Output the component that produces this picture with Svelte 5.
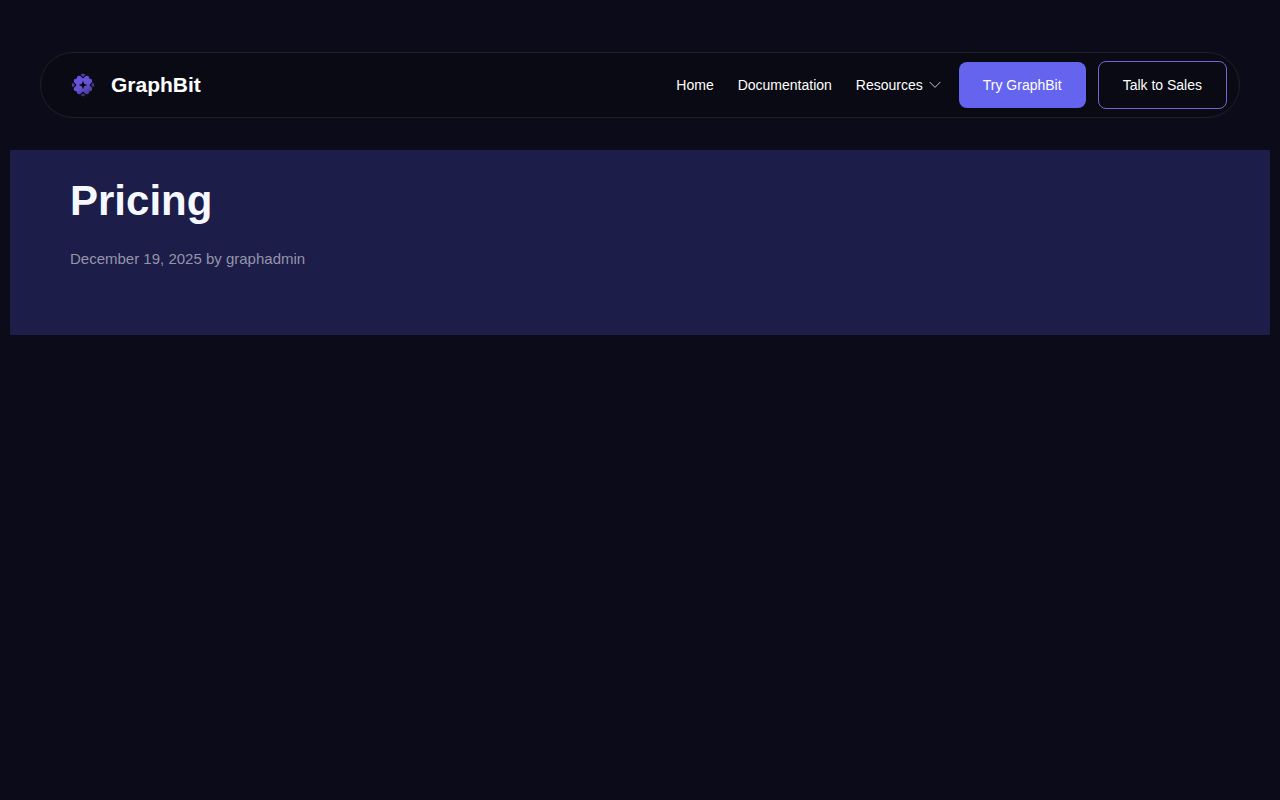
<script lang="ts">
  const links = [
    { label: 'Home', href: '#home' },
    { label: 'Documentation', href: '#documentation' }
  ];

  // the small logo tips, one for each side
  const tips = [0, 90, 180, 270];
</script>

<div class="page">
  <header class="navbar">
    <a class="brand" href="#home">
      <svg class="logo" viewBox="-12 -12 24 24" aria-hidden="true">
        <defs>
          <linearGradient id="logo-fill" gradientUnits="userSpaceOnUse" x1="-6" y1="-9" x2="7" y2="10">
            <stop offset="0" stop-color="#6a51e6" />
            <stop offset="0.5" stop-color="#6553d2" />
            <stop offset="1" stop-color="#40368c" />
          </linearGradient>
          <mask id="logo-mask" maskUnits="userSpaceOnUse" x="-12" y="-12" width="24" height="24">
            <path
              fill="#fff"
              d="M0 -6.4L3 -9.2L5.4 -9L6.4 -6.4L9 -5.4L9.2 -3L6.4 0L9.2 3L9 5.4L6.4 6.4L5.4 9L3 9.2L0 6.4L-3 9.2L-5.4 9L-6.4 6.4L-9 5.4L-9.2 3L-6.4 0L-9.2 -3L-9 -5.4L-6.4 -6.4L-5.4 -9L-3 -9.2Z"
            />
            <path fill="#000" d="M0 -4.2L1.2 -1.2L4.2 0L1.2 1.2L0 4.2L-1.2 1.2L-4.2 0L-1.2 -1.2Z" />
            {#each tips as angle}
              <path fill="#bbb" transform="rotate({angle})" d="M-2.5 -10.2L0 -11.4L2.5 -10.2L0 -8Z" />
            {/each}
          </mask>
        </defs>
        <rect x="-12" y="-12" width="24" height="24" fill="url(#logo-fill)" mask="url(#logo-mask)" />
      </svg>
      <span class="brand-name">GraphBit</span>
    </a>

    <nav class="menu">
      {#each links as link}
        <a href={link.href}>{link.label}</a>
      {/each}
      <button class="dropdown" type="button" aria-haspopup="true">
        Resources
        <svg class="chevron" viewBox="0 0 12 8" aria-hidden="true">
          <path d="M.7 1L6 6.4L11.3 1" />
        </svg>
      </button>
    </nav>

    <div class="actions">
      <a class="button primary" href="#try">Try GraphBit</a>
      <a class="button outline" href="#sales">Talk to Sales</a>
    </div>
  </header>

  <main class="post">
    <h1>Pricing</h1>
    <p class="meta"><time datetime="2025-12-19">December 19, 2025</time> by <a href="#author">graphadmin</a></p>
  </main>
</div>

<style>
  :global(body) {
    margin: 0;
    background: #0c0b19;
  }

  .page {
    padding: 52px 10px 0;
    font-family: 'Liberation Sans', Arial, sans-serif;
    font-size: 14px;
    line-height: 20px;
    color: #fff;
  }

  a {
    color: inherit;
    text-decoration: none;
  }

  .navbar {
    display: flex;
    align-items: center;
    box-sizing: border-box;
    margin: 0 30px;
    padding: 8px 12px 8px 30px;
    border: 1px solid #20202b;
    border-radius: 36px;
    background: #090a14;
  }

  .brand {
    display: flex;
    align-items: center;
    gap: 16px;
    margin-right: auto;
  }

  .logo {
    width: 24px;
    height: 24px;
  }

  .brand-name {
    font-size: 21px;
    font-weight: 700;
    line-height: 24px;
  }

  .menu {
    display: flex;
    align-items: center;
    gap: 24px;
    margin-right: 18px;
  }

  .dropdown {
    display: flex;
    align-items: center;
    gap: 6px;
    padding: 0;
    border: 0;
    background: none;
    color: inherit;
    font: inherit;
    cursor: pointer;
  }

  .chevron {
    width: 12px;
    height: 8px;
    fill: none;
    stroke: #c5c5ca;
    stroke-width: 1;
  }

  .actions {
    display: flex;
    align-items: center;
    gap: 12px;
  }

  .button {
    padding: 13px 24px;
    border-radius: 8px;
    white-space: nowrap;
  }

  .primary {
    background: #6464ef;
  }

  .outline {
    border: 1px solid #7267ce;
  }

  .post {
    margin-top: 32px;
    padding: 24px 60px 66px;
    border-radius: 1px;
    background: #1c1d48;
  }

  h1 {
    margin: 0 0 20px;
    font-size: 42px;
    font-weight: 700;
    line-height: 54px;
    color: #f5f8ff;
  }

  .meta {
    margin: 0;
    font-size: 15px;
    line-height: 21px;
    color: #9495a8;
  }
</style>
